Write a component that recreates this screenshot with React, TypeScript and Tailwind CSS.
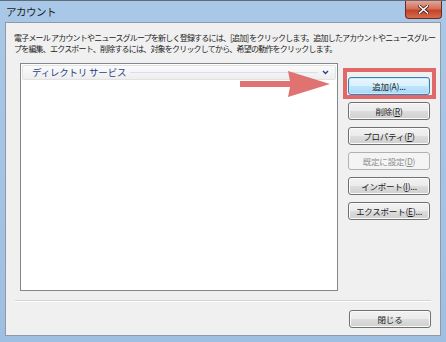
import React from "react";

const JP = { fontFamily: '"Noto Sans CJK JP", "Noto Sans", sans-serif' };

type BtnProps = { label: React.ReactNode; kind?: "normal" | "default" | "disabled" };

function Btn({ label, kind = "normal" }: BtnProps) {
  const base =
    "h-[18px] w-[82px] rounded-[3px] border flex items-center justify-center text-[8.5px] tracking-[-0.2px] leading-none";
  if (kind === "default") {
    return (
      <div
        className={`${base} border-[#3c7fb1] text-[#222] bg-[linear-gradient(to_bottom,#eaf6fd_0%,#d9f0fc_50%,#bee6fd_51%,#a7d9f5_100%)] shadow-[inset_0_0_0_1px_#c8e8fb]`}
      >
        {label}
      </div>
    );
  }
  if (kind === "disabled") {
    return (
      <div className={`${base} border-[#adb2b5] text-[#8d8d8d] bg-[#f4f4f4]`}>{label}</div>
    );
  }
  return (
    <div
      className={`${base} border-[#707070] text-[#222] bg-[linear-gradient(to_bottom,#f2f2f2_0%,#ebebeb_50%,#dddddd_51%,#cfcfcf_100%)] shadow-[inset_0_0_0_1px_#fbfbfb]`}
    >
      {label}
    </div>
  );
}

export default function App() {
  return (
    <div
      className="relative w-[446px] h-[342px] overflow-hidden bg-[linear-gradient(to_bottom,#a9c8e8,#9fbfe2)] border-t border-[#5d6b7a]"
      style={JP}
    >
      {/* title bar */}
      <div className="h-[21px] flex items-center pl-[6px] text-[10.5px] tracking-[-0.5px] text-[#1e1e1e]">
        アカウント
      </div>
      <div className="absolute top-0 right-[4px] w-[37px] h-[18px] rounded-b-[4px] border border-t-0 border-[#6b2a22] bg-[linear-gradient(to_bottom,#e8a493_0%,#d2705a_45%,#c2442a_55%,#d86b4a_100%)] flex items-center justify-center">
        <svg width="11" height="9" viewBox="0 0 11 9">
          <path d="M1.5 1 L9.5 8 M9.5 1 L1.5 8" stroke="#3a1a14" strokeWidth="3" strokeLinecap="square" />
          <path d="M1.5 1 L9.5 8 M9.5 1 L1.5 8" stroke="#ffffff" strokeWidth="1.6" strokeLinecap="square" />
        </svg>
      </div>

      {/* client area */}
      <div className="absolute left-[5px] right-[5px] top-[21px] bottom-[6px] bg-[#f0f0f0] border border-[#8e9aa8] flex flex-col">
        <div className="pl-[8px] pt-[9px] text-[8px] leading-[11px] tracking-[-0.8px] text-[#1e1e1e] whitespace-nowrap">
          電子メール アカウントやニュースグループを新しく登録するには、[追加] をクリックします。追加したアカウントやニュースグルー
          <br />
          プを編集、エクスポート、削除するには、対象をクリックしてから、希望の動作をクリックします。
        </div>

        <div className="flex mt-[9px] pl-[14px]">
          {/* list */}
          <div className="w-[318px] h-[228px] bg-white border border-[#828790] p-px">
            <div className="h-[15px] flex items-center pl-[9px] pr-[6px] bg-[linear-gradient(to_bottom,#fbfbfb,#eeeeee)] border border-[#e2e2e2] rounded-[2px]">
              <span className="text-[9.5px] tracking-[-0.2px] text-[#2a3f8e]">ディレクトリ サービス</span>
              <div className="flex-1 h-px bg-[#d6dfee] mx-[4px]" />
              <svg width="7" height="5" viewBox="0 0 7 5">
                <path d="M1 1 L3.5 3.5 L6 1" stroke="#2a3f8e" strokeWidth="1.4" fill="none" />
              </svg>
            </div>
          </div>

          {/* buttons */}
          <div className="ml-[10px] pt-[14px] flex flex-col gap-[7px]">
            <Btn kind="default" label="追加(A)..." />
            <Btn label={<span>削除(<u>R</u>)</span>} />
            <Btn label={<span>プロパティ(<u>P</u>)</span>} />
            <Btn kind="disabled" label={<span>既定に設定(<u>D</u>)</span>} />
            <Btn label={<span>インポート(<u>I</u>)...</span>} />
            <Btn label={<span>エクスポート(<u>E</u>)...</span>} />
          </div>
        </div>

        <div className="mt-[9px] ml-[9px] mr-[9px] h-px bg-[#d5d5d5] border-b border-white box-content" />

        <div className="flex justify-end pr-[9px] mt-[8px]">
          <Btn label="閉じる" />
        </div>
      </div>

      {/* annotation overlay */}
      <div className="absolute left-[343px] top-[67px] w-[93px] h-[31px] border-[4px] border-[#e06a6a]" />
      <svg className="absolute left-[238px] top-[68px]" width="96" height="30" viewBox="0 0 96 30">
        <path d="M2 12 L52 12 L50 2 L92 15 L50 28 L52 18 L2 18 Z" fill="#e07272" />
      </svg>
    </div>
  );
}
